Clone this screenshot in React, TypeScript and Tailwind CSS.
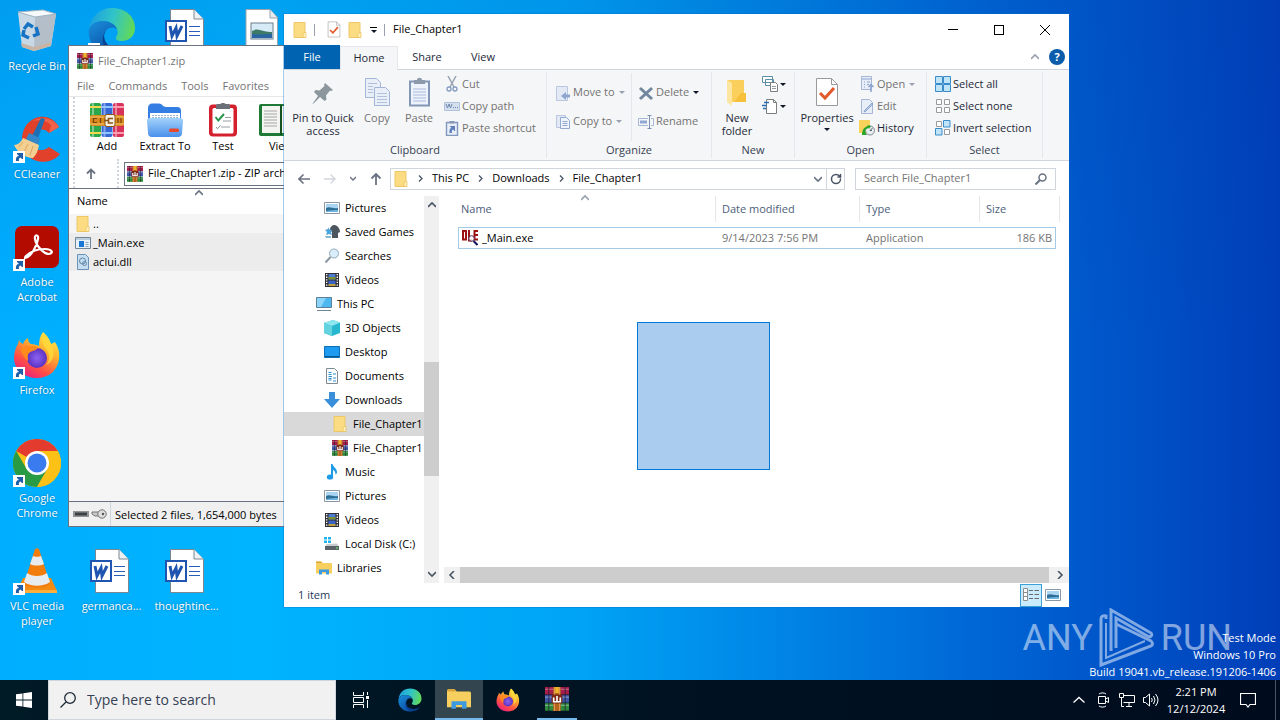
import { ReactNode } from "react";
import { RotateCw } from "lucide-react";

/* ---------- icons ---------- */

const Folder = ({ className = "h-4 w-4" }) => (
  <svg className={className} viewBox="0 0 16 16" aria-hidden="true">
    <path d="M2 .5h11v15H2z" fill="#fbdc82" stroke="#eec868" />
    <path d="M12 10.5h2v5h-3v-3z" fill="#fff0bd" stroke="#e9bf55" strokeWidth=".7" />
  </svg>
);

const WinrarIcon = ({ className = "h-4 w-4" }) => (
  <svg className={className} viewBox="0 0 16 16" aria-hidden="true">
    <rect x="0" y="0" width="16" height="5" fill="#a51e4b" />
    <rect x="0" y="5.4" width="16" height="5" fill="#3f55a8" />
    <rect x="0" y="10.8" width="16" height="5" fill="#2e8a3c" />
    <path d="M0 1.5h16M0 6.8h16M0 12.2h16" stroke="#fff" strokeOpacity=".35" strokeWidth=".8" />
    <path d="M2.5 0v16M13.5 0v16" stroke="#1d1d2c" strokeOpacity=".55" strokeWidth=".9" />
    <rect x="5.5" y="0" width="5" height="16" fill="#b5651d" />
    <path d="M6.3 0v16M9.7 0v16" stroke="#e9a35a" strokeWidth=".6" />
    <rect x="4.4" y="5" width="7.2" height="6" rx=".8" fill="#7c2a18" />
    <path d="M5.8 7v2.800h4.400V7M8 6v3.800" fill="none" stroke="#fff" strokeWidth="1.1" />
    <rect x="6.8" y="0" width="2.4" height="4" fill="#f0b429" />
  </svg>
);

const AddIcon = () => (
  <svg className="h-[34px] w-[34px]" viewBox="0 0 34 34" aria-hidden="true">
    <rect x="0" y="0" width="11" height="34" rx="2" fill="#2aa84a" />
    <rect x="11.5" y="0" width="11" height="34" rx="2" fill="#3567d6" />
    <rect x="23" y="0" width="11" height="34" rx="2" fill="#d6325a" />
    <path d="M3 0v34M14.5 0v34M26 0v34" stroke="#fff" strokeOpacity=".4" strokeWidth="2" />
    <path d="M0 4h11M0 30h11" stroke="#f3d84c" strokeWidth="2" />
    <path d="M11.5 4h11M11.5 30h11" stroke="#8fc4ff" strokeWidth="2" />
    <path d="M23 4h11M23 30h11" stroke="#ff9bb0" strokeWidth="2" />
    <rect x="0" y="12" width="34" height="11" rx="2" fill="#d78a1f" />
    <path d="M0 14h34M0 21h34" stroke="#f7c568" />
    <path d="M7 15.5H3.5v4H7M10.5 15v5M28 15v5M31 15v5" fill="none" stroke="#7b420b" strokeWidth="1.2" />
    <rect x="15" y="11.5" width="10" height="12" rx="2" fill="#f8f2e6" stroke="#8c5413" />
    <path d="M23 15.5h-4.5v4.5H23M14 17.5h5" fill="none" stroke="#8c5413" strokeWidth="1.6" />
  </svg>
);

const ExtractIcon = () => (
  <svg className="h-[34px] w-[36px]" viewBox="0 0 36 34" aria-hidden="true">
    <defs>
      <linearGradient id="extract" x1="0" y1="0" x2="0" y2="1">
        <stop offset="0" stopColor="#a4d3fb" />
        <stop offset="1" stopColor="#4a90ec" />
      </linearGradient>
    </defs>
    <path d="M1 5c0-3 2-4.5 4-4.5h7c3 0 4 3.500 7 3.500h11c3 0 4 1.500 4 4v22H1z" fill="#347de3" />
    <rect x="3" y="10" width="30" height="12" fill="#fff" />
    <path d="M5 12.5h26M5 14.5h26" stroke="#9bb6d6" strokeDasharray="2 1" />
    <path d="M0 18c0-2 1-3 3-3h30c2 0 3 1 3 3l-1 12c0 2.500-1.500 4-4 4H5c-2.500 0-4-1.500-4-4z" fill="url(#extract)" />
    <rect x="22" y="25.5" width="10" height="3.500" rx="1.500" fill="#e8482e" />
  </svg>
);

const TestIcon = () => (
  <svg className="h-[34px] w-[28px]" viewBox="0 0 28 34" aria-hidden="true">
    <rect x="0" y="1.5" width="28" height="32" rx="4" fill="#d4202c" />
    <rect x="3.5" y="5" width="21" height="25.5" rx="1.5" fill="#fff" />
    <path d="M7 6V3c0-1.500 1-2 2-2h2.500c.5-1.200 4.500-1.200 5 0H19c1 0 2 .5 2 2v3z" fill="#6b7078" />
    <path d="m6.500 14 2.800 3.500L15 11" fill="none" stroke="#27964a" strokeWidth="2" />
    <path d="M16 14.500h6M14 18h8M12 24h9" stroke="#9a9fa6" />
    <path d="m7 24 1.500 1.800 3-3.500" fill="none" stroke="#8a8f96" />
  </svg>
);

const ViewIcon = () => (
  <svg className="h-[34px] w-[44px]" viewBox="0 0 44 34" aria-hidden="true">
    <rect x="0" y="1" width="44" height="32" rx="2" fill="#1f7a35" />
    <path d="M3 3h18v27H3zM23 3h18v27H23z" fill="#f4f4f0" />
    <path d="M5 8h13M5 11h13M5 14h13M5 17h13M5 20h13M5 23h13M26 8h12M26 11h12M26 14h12" stroke="#a5a8a8" />
    <path d="M22 2v30" stroke="#14521f" strokeWidth="2" />
  </svg>
);

const Edge = ({ className = "h-6 w-6" }) => (
  <svg className={className} viewBox="0 0 48 48" aria-hidden="true">
    <defs>
      <linearGradient id="edgeTop" x1="0" y1=".3" x2="1" y2=".5">
        <stop offset="0" stopColor="#1b9fe0" />
        <stop offset=".5" stopColor="#31c4c8" />
        <stop offset="1" stopColor="#62d957" />
      </linearGradient>
      <linearGradient id="edgeBody" x1="0" y1="0" x2=".6" y2="1">
        <stop offset="0" stopColor="#1a8fdc" />
        <stop offset="1" stopColor="#0b4fa5" />
      </linearGradient>
    </defs>
    <path d="M1 22C3 9 12 1 24 1c14 0 23 9 23 20 0 8-6 13-13 13-5 0-7-2-6-4 2-3 2-5 1-8-2-5-8-8-14-8C8 14 3 17 1 22z" fill="url(#edgeTop)" />
    <path d="M1 22c3-6 8-8 14-8 6 0 12 3 14 8-7-4-13 1-13 8 0 8 7 16 15 16-4 1-6 1-8 1C9 47-1 35 1 22z" fill="url(#edgeBody)" />
    <path d="M16 28c0 10 8 14 16 14 5 0 9-2 12-5-4 7-10 10-17 9-11-1-16-14-9-22z" fill="#0a3f8f" />
  </svg>
);

const Firefox = ({ className = "h-6 w-6" }) => (
  <svg className={className} viewBox="0 0 48 48" aria-hidden="true">
    <defs>
      <linearGradient id="fox" x1=".8" y1="0" x2=".2" y2="1">
        <stop offset="0" stopColor="#fff04a" />
        <stop offset=".35" stopColor="#ffb02e" />
        <stop offset=".7" stopColor="#ff4f45" />
        <stop offset="1" stopColor="#e5198b" />
      </linearGradient>
      <radialGradient id="foxGlobe">
        <stop offset="0" stopColor="#8b62f2" />
        <stop offset="1" stopColor="#5b32c0" />
      </radialGradient>
    </defs>
    <path d="M30 1c5 4 7 9 8 12l4-2c3 5 5 10 4 17-1 11-10 19-22 19S1 39 1 27c0-6 2-11 4-14l1-4c1 2 2 3 4 4 1-3 3-5 5-6 0 3 1 5 3 6 3 0 6 1 8 2 0-6 1-10 4-14z" fill="url(#fox)" />
    <circle cx="24" cy="27" r="10" fill="url(#foxGlobe)" />
    <path d="M7 18c5-4 12-4 18-2-1 4-5 3-9 6-2 2-1 5-1 8-4-3-6-8-8-12z" fill="#ff8a1e" />
    <path d="M30 2c-3 8 0 12 4 17 3 5 3 11-1 15 8-3 10-13 5-21-1-3-3-8-8-11z" fill="#ffd93b" fillOpacity=".8" />
  </svg>
);

const Chrome = () => (
  <svg className="h-12 w-12" viewBox="0 0 48 48" aria-hidden="true">
    <circle cx="24" cy="24" r="24" fill="#fbc116" />
    <path d="M24 24 3.200 12A24 24 0 0 1 44.800 12z" fill="#e33b2e" />
    <path d="M3.200 12A24 24 0 0 0 24 48l10.400-18L24 36 13.600 30z" fill="#2a9b45" />
    <path d="M24 12h20.800A24 24 0 0 1 24 48l10.400-18z" fill="#fbc116" />
    <circle cx="24" cy="24" r="12" fill="#fff" />
    <circle cx="24" cy="24" r="9.500" fill="#3a7bef" />
  </svg>
);

const RecycleBin = () => (
  <svg className="h-12 w-12" viewBox="0 0 48 48" aria-hidden="true">
    <path d="M5 5 30 3l13 4-5 32-17 5-12-4z" fill="#d3dbe3" fillOpacity=".95" />
    <path d="m22 10 21-3-5 32-17 5z" fill="#b3bec9" />
    <path d="M5 5 30 3l13 4-21 3z" fill="#f6fafc" stroke="#9fb3c2" />
    <path d="m8 36 13 4 17-5-.5 4L21 44 9 40z" fill="#c8b5a5" />
    <g fill="none" stroke="#1673c4" strokeWidth="3.500">
      <path d="m11 22 4-5 5 3M23 20l2 7-5 2M16 31l-6-3 1-5" />
    </g>
  </svg>
);

const Ccleaner = () => (
  <svg className="h-12 w-12" viewBox="0 0 48 48" aria-hidden="true">
    <path d="m46 12-10 6c-6-7-17-3-17 7s10 13 17 7l11 7C36 53 9 48 9 25 9 1 36-6 46 12z" fill="#e1402b" />
    <path d="M46 12c-6-8-16-12-26-6 8-2 14 0 18 4l-2 8z" fill="#f0634a" />
    <path d="m28 3 4 1-8 22-6-3z" fill="#1e6fb4" />
    <path d="m16 18 11 5-2 8-13-5z" fill="#3487c8" />
    <path d="m10 23 16 7c-1 5-2 9-6 13C12 43 4 37 1 30c4 0 7-3 9-7z" fill="#f4cf92" />
    <path d="m10 27-4 5M15 29l-4 8M20 31l-3 9" stroke="#d9a65f" />
  </svg>
);

const Acrobat = () => (
  <svg className="h-12 w-12" viewBox="0 0 48 48" aria-hidden="true">
    <rect x="2" y="3" width="44" height="42" rx="7" fill="#b30b00" />
    <path
      d="M12 35c6-1 12-12 13-19 1-5-4-5-3 0 1 7 9 15 14 15 5-1 3-5-4-5-8 0-15 3-19 7-1 1-1 2-1 2z"
      fill="none"
      stroke="#fff"
      strokeWidth="2.200"
    />
  </svg>
);

const Vlc = () => (
  <svg className="h-12 w-12" viewBox="0 0 48 48" aria-hidden="true">
    <path d="M10 31h28l6 13c0 2-1 2-2 2H6c-1 0-2 0-2-2z" fill="#f48b14" />
    <path d="M4 43h40v3H4z" fill="#ffae3b" />
    <path d="M22 2c1-1 3-1 4 0l11 35c-4 5-22 5-26 0z" fill="#f27d0c" />
    <path d="m20 9-3 8c4 2 10 2 14 0l-3-8c-2 1-6 1-8 0zM14 26l-3 9c7 5 19 5 26 0l-3-9c-5 4-15 4-20 0z" fill="#e9ecef" />
  </svg>
);

const WordDoc = () => (
  <svg className="h-12 w-12" viewBox="0 0 48 48" aria-hidden="true">
    <path d="M7.500 2.500H31l9.500 10v33h-33z" fill="#fff" stroke="#7c8791" />
    <path d="M31 2.500V12h9.500" fill="#eef1f3" stroke="#7c8791" />
    <path d="M26 19.500h11M26 24.500h11M26 28.500h11" stroke="#2a5db5" />
    <rect x="3" y="14" width="20" height="20" fill="#fff" stroke="#1f55b0" strokeWidth="2" />
    <path d="m7 19 2 10 4-8 1 8 5-10" fill="none" stroke="#1f55b0" strokeWidth="3" />
  </svg>
);

const PictureDoc = () => (
  <svg className="h-12 w-12" viewBox="0 0 48 48" aria-hidden="true">
    <path d="M8 2.500h24l7.500 8v35H8z" fill="#fff" stroke="#98a3ab" />
    <path d="M32 2.500V11h7.500" fill="#e7ebee" stroke="#98a3ab" />
    <rect x="13" y="16" width="22" height="16" fill="#d7ebf7" stroke="#6d7f8c" />
    <path d="M14 24c7-4 11 2 20 1v6H14z" fill="#3d7a68" />
    <path d="M14 27c7 1 13 0 20 0v4H14z" fill="#2a64a3" />
  </svg>
);

const Shortcut = () => (
  <svg className="absolute bottom-0 left-0 h-3 w-3" viewBox="0 0 12 12" aria-hidden="true">
    <path d="M0 0h12v12H0z" fill="#fff" />
    <path d="M3 10c-.5-3 .5-5 3-5L4 3V2h6v6H9L7.500 6.500C6 7 5.500 8 6 10z" fill="#1f5fa8" />
  </svg>
);

const ImageIcon = () => (
  <svg className="h-4 w-4" viewBox="0 0 16 16" aria-hidden="true">
    <path d="M.5 2.500h15v11H.5z" fill="#fff" stroke="#8b98a3" />
    <path d="M2 4h12v8H2z" fill="#a9d5f3" />
    <path d="M2 8c4-2 7 1 12 0v4H2z" fill="#2f6f96" />
    <path d="M2 11c5-1 8-1 12-1v2H2z" fill="#6db6e4" />
  </svg>
);

const GamesIcon = () => (
  <svg className="h-4 w-4" viewBox="0 0 16 16" aria-hidden="true">
    <path d="M8 14V8L6 6c0-3 2-5 5-5 3 1 5 4 5 7l-2 1v5z" fill="#4d565e" />
    <path d="m4 3 1 2 3 1-1 2 1 3-3-1-3 1 1-3-2-2 3-1z" fill="#4ea3dc" />
    <path d="M1 12h6v2H2z" fill="#8ab9d6" />
  </svg>
);

const SearchesIcon = () => (
  <svg className="h-4 w-4" viewBox="0 0 16 16" aria-hidden="true">
    <circle cx="10" cy="5.500" r="4.500" fill="#d8eefb" stroke="#93a9b9" />
    <path d="M6.500 9 1.500 14.500" stroke="#8a97a2" strokeWidth="2" />
  </svg>
);

const VideoIcon = () => (
  <svg className="h-4 w-4" viewBox="0 0 16 16" aria-hidden="true">
    <path d="M1 1h14v14H1z" fill="#2f2f33" />
    <path d="M2.700 2v13M13.300 2v13" stroke="#fff" strokeWidth="1.400" strokeDasharray="1.300 1.300" />
    <path d="M4.500 2h7v5.500h-7z" fill="#4c7bd0" />
    <path d="M4.500 5h7v2.500h-7z" fill="#7a8c34" />
    <path d="M4.500 8.500h7V14h-7z" fill="#3d63c7" />
    <path d="M4.500 12h7v2h-7z" fill="#c0a03a" />
  </svg>
);

const PcIcon = () => (
  <svg className="h-4 w-4" viewBox="0 0 16 16" aria-hidden="true">
    <path d="M.5 1.500h15v10H.5z" fill="#4db8f0" stroke="#5c7f96" />
    <path d="M1 2h9L5 11H1z" fill="#8bd5fa" />
    <path d="M1 14.500h14" stroke="#6f8796" />
  </svg>
);

const CubeIcon = () => (
  <svg className="h-4 w-4" viewBox="0 0 16 16" aria-hidden="true">
    <path d="M0 3 9 0l7 2.500V13l-8 3-8-3z" fill="#27b7cf" />
    <path d="m0 3 9-3 7 2.500L8 6z" fill="#8fe7ef" />
    <path d="m0 3 8 3v10l-8-3z" fill="#63d4df" />
  </svg>
);

const DesktopIcon = () => (
  <svg className="h-4 w-4" viewBox="0 0 16 16" aria-hidden="true">
    <path d="M.5 2.500h15v11H.5z" fill="#1c9bf0" stroke="#0b6fb8" />
    <path d="M1 12.500h14" stroke="#0a578f" />
  </svg>
);

const DocIcon = () => (
  <svg className="h-4 w-4" viewBox="0 0 16 16" aria-hidden="true">
    <path d="M2.500.5h8l3 3v12h-11z" fill="#fff" stroke="#7e8b95" />
    <path d="M4.500 4.500h3M9 6h3M4.500 8.500H8M9 10h3M4.500 12h3M9 13h3M4.500 6.500h3M4.500 10.500h3" stroke="#2b8fd0" />
  </svg>
);

const DownArrow = () => (
  <svg className="h-4 w-4" viewBox="0 0 16 16" aria-hidden="true">
    <path d="M5 0h6v7h5l-8 9-8-9h5z" fill="#3a8fdb" />
  </svg>
);

const MusicIcon = () => (
  <svg className="h-4 w-4" viewBox="0 0 16 16" aria-hidden="true">
    <path d="M7 0h1.500c.5 3 5 4.500 4.500 9l-1.500 1.500C11.500 8 10.500 6.500 9 6v7H7z" fill="#1e9be8" />
    <ellipse cx="6" cy="13" rx="3.200" ry="2.600" fill="#1e9be8" />
  </svg>
);

const DiskIcon = () => (
  <svg className="h-4 w-4" viewBox="0 0 16 16" aria-hidden="true">
    <path d="M0 1h3v2.500H0zM4 1h3v2.500H4zM0 4.500h3V7H0zM4 4.500h3V7H4z" fill="#1fb3ea" />
    <path d="m3 8 10-.5 2 3H1z" fill="#c8ccd0" />
    <path d="M1 10h14v4H1z" fill="#5b6168" />
    <path d="M12 12h2" stroke="#6dfc6d" />
  </svg>
);

const LibraryIcon = ({ className = "h-4 w-4" }) => (
  <svg className={className} viewBox="0 0 16 16" aria-hidden="true">
    <path d="M0 2.500c0-.5.500-1 1-1h4L6.500 3H15c.5 0 1 .5 1 1v9.500H0z" fill="#f7cf5f" />
    <path d="M0 2.500c0-.5.500-1 1-1h4L6.500 3H0z" fill="#dca53a" />
    <path d="M3 14.500V9.500h10v5h-3V12H6v2.500z" fill="#3f9be0" />
  </svg>
);

const Caret = ({ className = "fill-gray-900" }) => (
  <svg className={`h-[3px] w-[6px] ${className}`} viewBox="0 0 6 3" aria-hidden="true">
    <path d="M0 0h6L3 3z" />
  </svg>
);

const Chevron = ({ className = "" }) => (
  <svg className={`h-2 w-2 fill-none stroke-current ${className}`} viewBox="0 0 8 8" aria-hidden="true">
    <path d="m0 2 4 4 4-4" strokeWidth="1.600" />
  </svg>
);

/* ribbon icons, faded ones belong to disabled commands */

const PinIcon = () => (
  <svg className="h-8 w-8" viewBox="0 0 32 32" aria-hidden="true">
    <path d="m18 6 8 7-2 1-1-.5-4 5 .5 4-2 1.500-4.500-4-6.500 6.500-1 .5.500-1L11 19l-4-4 1.500-2 4 .5 5-4.500-.5-1z" fill="#8b969d" />
  </svg>
);

const CopyIcon = () => (
  <svg className="h-8 w-8" viewBox="0 0 32 32" aria-hidden="true">
    <g fill="#e9eff9" stroke="#a3b5d6">
      <path d="M4.500 1.500h11l4 4v15h-15z" />
      <path d="M13.500 10.500h11l4 4v14h-15z" />
    </g>
    <path d="M7 6.500h9M7 9.500h5M7 12.500h5M7 15.500h5M16 16.500h10M16 19.500h10M16 22.500h10M16 25.500h10" stroke="#b2c0db" />
  </svg>
);

const PasteIcon = () => (
  <svg className="h-8 w-8" viewBox="0 0 32 32" aria-hidden="true">
    <path d="M7 4.500h19v24H7z" fill="#eef2fa" stroke="#8296b5" strokeWidth="2" />
    <path d="M11 7V3h3c0-3 5-3 5 0h3v4z" fill="#8c9aac" />
    <path d="M10 12h13M10 15h13M10 18h13M10 21h13M10 24h13" stroke="#a8b9dc" />
  </svg>
);

const CutIcon = () => (
  <svg className="h-4 w-4" viewBox="0 0 16 16" fill="none" aria-hidden="true">
    <path d="m4 0 6 11M12 0 6 11" stroke="#98a4b1" strokeWidth="1.500" />
    <circle cx="5" cy="13" r="2" stroke="#829cc0" strokeWidth="1.300" />
    <circle cx="11" cy="13" r="2" stroke="#829cc0" strokeWidth="1.300" />
  </svg>
);

const PathIcon = () => (
  <svg className="h-4 w-4" viewBox="0 0 16 16" fill="none" aria-hidden="true">
    <path d="M.5 4.500h15v8H.5z" fill="#d5e0ef" stroke="#b1c1da" />
    <path d="m2 6 1.500 4L5 6l1.500 4L8 6M9 9.500h1M11 9.500h1M13 9.500h1" stroke="#6f87ad" />
  </svg>
);

const PasteShortcutIcon = () => (
  <svg className="h-4 w-4" viewBox="0 0 16 16" aria-hidden="true">
    <path d="M2.500 2.500h11v13h-11z" fill="#e8eef8" stroke="#8298bf" strokeWidth="1.400" />
    <path d="M5.500 1h5v2.500h-5z" fill="#8b9ab4" />
    <path d="M5.500 13c-.5-3 .5-5 2-5L6 6.500V6h5v5h-.5L9 9.500C8 10 7.500 11 8 13z" fill="#5f7fbb" />
  </svg>
);

const MoveIcon = () => (
  <svg className="h-4 w-4" viewBox="0 0 16 16" aria-hidden="true">
    <path d="M1.500 1.500h11v14h-11z" fill="#e3eaf6" stroke="#b9c7e0" />
    <path d="M15 9.500h-4V7l-5 4 5 4v-2.500h4z" fill="#8da6d0" />
  </svg>
);

const CopyToIcon = () => (
  <svg className="h-4 w-4" viewBox="0 0 16 16" fill="none" aria-hidden="true">
    <path d="M1.500 1.500h9v12h-9z" fill="#e3eaf6" stroke="#b9c7e0" />
    <path d="M5.500 3.500h6l3 3v8h-9z" fill="#eef3fb" stroke="#94a9cf" />
    <path d="M7.500 7.500h5M7.500 9.500h5M7.500 11.500h5" stroke="#94a9cf" />
  </svg>
);

const DeleteIcon = () => (
  <svg className="h-4 w-4" viewBox="0 0 16 16" aria-hidden="true">
    <path d="m2 3 12 11M14 3 2 14" stroke="#71879f" strokeWidth="3" />
  </svg>
);

const RenameIcon = () => (
  <svg className="h-4 w-4" viewBox="0 0 16 16" fill="none" aria-hidden="true">
    <path d="M10 4.500H.5v7H10M13 4.500h2.500v7H13" stroke="#a7b8d5" />
    <path d="M2 6.500h7v3H2z" fill="#8fa8d3" />
    <path d="M9.500 1.500h4M9.500 14.500h4M11.500 1.500v13" stroke="#7b90b3" />
  </svg>
);

const NewFolderIcon = () => (
  <svg className="h-8 w-8" viewBox="0 0 32 32" aria-hidden="true">
    <path d="M6 3h17v22H6z" fill="#fbcf5b" />
    <path d="m6 3 5 3v23l-5-4z" fill="#fde6a2" />
    <path d="M20 16h5v9H13z" fill="#f6bf3c" />
  </svg>
);

const NewItemIcon = () => (
  <svg className="h-4 w-4" viewBox="0 0 16 16" fill="none" aria-hidden="true">
    <path d="M.5.500h10v6H.5zM3.500 3.500h8v6h-8z" fill="#fff" stroke="#5d8fa8" />
    <path d="M8.500 6.500h5l2 2v7h-7z" fill="#fff" stroke="#7d7d7d" />
    <path d="M10 10.500h4M10 12.500h4" stroke="#9a9a9a" />
  </svg>
);

const EasyAccessIcon = () => (
  <svg className="h-4 w-4" viewBox="0 0 16 16" fill="none" aria-hidden="true">
    <path d="M4.500 1.500h7l3 3v11h-10z" fill="#fff" stroke="#7d7d7d" />
    <path d="M11.500 1.500v3h3" stroke="#7d7d7d" />
    <path d="M2 4.500h5M0 7.500h5M1 10.500h3" stroke="#2b6db3" strokeWidth="1.300" />
  </svg>
);

const PropertiesIcon = ({ className = "h-8 w-8" }) => (
  <svg className={className} viewBox="0 0 32 32" fill="none" aria-hidden="true">
    <path d="M5.500 1.500h15l6 6v21h-21z" fill="#fff" stroke="#9a9a9a" />
    <path d="M20.500 1.500v6h6" stroke="#9a9a9a" />
    <path d="m9 16 5 5 9-10" stroke="#e2592c" strokeWidth="3" />
  </svg>
);

const OpenIcon = () => (
  <svg className="h-4 w-4" viewBox="0 0 16 16" fill="none" aria-hidden="true">
    <path d="M2.500.500h10v13h-10z" fill="#e8eef8" stroke="#a6b6d4" />
    <path d="M3 3h9M5 6h1M8 6h3M5 8.500h1M8 8.500h2M5 11h1" stroke="#8ba3cf" />
    <path d="M12 8v8M9.500 11 12 8.500l2.500 2.500" stroke="#8ba3cf" strokeWidth="1.500" />
  </svg>
);

const EditIcon = () => (
  <svg className="h-4 w-4" viewBox="0 0 16 16" fill="none" aria-hidden="true">
    <path d="M2.500 1.500h8l3 3v11h-11z" fill="#e8eef8" stroke="#a6b6d4" />
    <path d="m14 6-7 7-2 1 1-2 7-7z" fill="#c3cfe4" stroke="#8ba3cf" />
  </svg>
);

const HistoryIcon = () => (
  <svg className="h-4 w-4" viewBox="0 0 16 16" fill="none" aria-hidden="true">
    <path d="M0 0h11v13H0z" fill="#f9d25c" />
    <circle cx="11" cy="10.500" r="4.500" fill="#e7edf0" stroke="#7d898f" />
    <path d="M11 10.500 13.500 8M11 10.500h2" stroke="#57626a" />
    <path d="M3 15c0-5 2-8 6-9l-1-1 4 1-2 3-.5-1C6 9 5 11 8 15z" fill="#28a528" />
  </svg>
);

const SelectAllIcon = () => (
  <svg className="h-4 w-4" viewBox="0 0 16 16" aria-hidden="true">
    <path d="M.5.500h7v7h-7zM8.500.500h7v7h-7zM.5 8.500h7v7h-7zM8.500 8.500h7v7h-7z" fill="#bfe3f8" stroke="#3a8cc8" />
  </svg>
);

const SelectNoneIcon = () => (
  <svg className="h-4 w-4" viewBox="0 0 16 16" aria-hidden="true">
    <path d="M1.500 1.500h5v5h-5zM9.500 1.500h5v5h-5zM1.500 9.500h5v5h-5zM9.500 9.500h5v5h-5z" fill="#fff" stroke="#9a9a9a" />
  </svg>
);

const InvertIcon = () => (
  <svg className="h-4 w-4" viewBox="0 0 16 16" aria-hidden="true">
    <path d="M1.500 1.500h5v5h-5zM9.500 9.500h5v5h-5z" fill="#fff" stroke="#9a9a9a" />
    <path d="M8.500.500h6.500v6.500H8.500zM.5 8.500h6.500v6.500H.5z" fill="#bfe3f8" stroke="#3a8cc8" />
  </svg>
);

const OleIcon = () => (
  <svg className="h-4 w-4" viewBox="0 0 16 16" fill="none" aria-hidden="true">
    <g stroke="#9c1111" strokeWidth="2">
      <path d="M1 1h3v8.500H1zM7 0v10.500h3M16 1h-3.500v8.500H16M12.500 5H16" />
    </g>
    <circle cx="9.500" cy="8.500" r="2.800" fill="#fff" fillOpacity=".7" stroke="#5b2c55" />
    <path d="m11.500 11 4 4" stroke="#14145e" strokeWidth="2" />
  </svg>
);

const ExeIcon = () => (
  <svg className="h-4 w-4" viewBox="0 0 16 16" aria-hidden="true">
    <path d="M.5 2.500h15v11H.5z" fill="#e8f1f8" stroke="#6f8799" />
    <path d="M1 3h14v2H1z" fill="#b9cddd" />
    <path d="M4 6h5v6H4z" fill="#1877d2" />
    <path d="M10.500 7.500h3M10.500 9.500h3M10.500 11.500h3" stroke="#8fa7ba" />
  </svg>
);

const DllIcon = () => (
  <svg className="h-4 w-4" viewBox="0 0 16 16" fill="none" aria-hidden="true">
    <path d="M2.500.500h8l3 3v12h-11z" fill="#c5ddf0" stroke="#6c93b5" />
    <circle cx="7.500" cy="7" r="3" stroke="#6289ab" />
    <circle cx="9.500" cy="9.500" r="2" stroke="#6289ab" />
  </svg>
);

/* ---------- desktop ---------- */

const desktopIcons = [
  { label: "Recycle Bin", icon: <RecycleBin />, place: "col-start-1 row-start-1" },
  { label: "CCleaner", icon: <Ccleaner />, place: "col-start-1 row-start-2", shortcut: true },
  { label: "Adobe Acrobat", icon: <Acrobat />, place: "col-start-1 row-start-3", shortcut: true },
  { label: "Firefox", icon: <Firefox className="h-12 w-12" />, place: "col-start-1 row-start-4", shortcut: true },
  { label: "Google Chrome", icon: <Chrome />, place: "col-start-1 row-start-5", shortcut: true },
  { label: "VLC media player", icon: <Vlc />, place: "col-start-1 row-start-6", shortcut: true },
  { label: "", icon: <Edge className="h-12 w-12" />, place: "col-start-2 row-start-1", shortcut: true },
  { label: "", icon: <WordDoc />, place: "col-start-3 row-start-1" },
  { label: "", icon: <PictureDoc />, place: "col-start-4 row-start-1" },
  { label: "germanca...", icon: <WordDoc />, place: "col-start-2 row-start-6" },
  { label: "thoughtinc...", icon: <WordDoc />, place: "col-start-3 row-start-6" },
];

function DesktopIcons() {
  return (
    <div className="grid auto-rows-[108px] grid-cols-[74px_75px_75px_75px] pt-[7px]">
      {desktopIcons.map((item, i) => (
        <div key={i} className={`flex flex-col items-center ${item.place}`}>
          <div className="relative">
            {item.icon}
            {item.shortcut && <Shortcut />}
          </div>
          <span className="mt-[3px] w-[68px] text-center leading-[15px] text-white [text-shadow:0_0_2px_rgba(0,0,0,0.4)]">
            {item.label}
          </span>
        </div>
      ))}
    </div>
  );
}

function Watermark() {
  return (
    <>
      <div className="absolute right-[48px] bottom-3 flex items-center gap-1.5 opacity-50" aria-hidden="true">
        <span className="font-[Roboto,sans-serif] text-4xl text-white">ANY</span>
        <svg className="h-[60px] w-[56px]" viewBox="0 0 56 60" fill="none" stroke="#fff" strokeWidth="3">
          <path d="M7 11V8Q2 7 2 11V57L52 38Q55 36 52 33L17 16" />
          <path d="M7 15V50L46 33" strokeWidth="2" />
          <path d="M12 43V2L52 25Q54 28 50 29L17 10V40" />
        </svg>
        <span className="font-[Roboto,sans-serif] text-4xl text-white">RUN</span>
      </div>
      <div className="absolute right-1 bottom-0 text-right leading-[17px] text-white">
        <p>Test Mode</p>
        <p>Windows 10 Pro</p>
        <p>Build 19041.vb_release.191206-1406</p>
      </div>
    </>
  );
}

/* ---------- WinRAR window ---------- */

const archiveTools = [
  { label: "Add", icon: <AddIcon /> },
  { label: "Extract To", icon: <ExtractIcon /> },
  { label: "Test", icon: <TestIcon /> },
  { label: "View", icon: <ViewIcon /> },
];

const archiveFiles = [
  { name: "..", icon: <Folder />, selected: false },
  { name: "_Main.exe", icon: <ExeIcon />, selected: true },
  { name: "aclui.dll", icon: <DllIcon />, selected: true },
];

function WinrarWindow() {
  return (
    <section className="absolute top-[45px] bottom-[153px] left-[68px] flex w-[250px] flex-col border border-gray-500 bg-white">
      <header className="flex h-[30px] shrink-0 items-center gap-[5px] pl-2 text-neutral-500">
        <WinrarIcon />
        <span>File_Chapter1.zip</span>
      </header>
      <nav className="flex h-5 shrink-0 items-center gap-3.5 pl-2 text-neutral-500">
        <button>File</button>
        <button>Commands</button>
        <button>Tools</button>
        <button>Favorites</button>
      </nav>
      <div className="flex h-[63px] shrink-0 border-t border-gray-200 pl-1">
        <div className="w-[5px] border-l-2 border-dotted border-gray-300" />
        {archiveTools.map((tool) => (
          <button key={tool.label} className="flex w-[58px] shrink-0 flex-col items-center gap-px pt-1.5">
            {tool.icon}
            <span className="whitespace-nowrap">{tool.label}</span>
          </button>
        ))}
      </div>
      <div className="flex h-[30px] shrink-0 items-center border-b border-gray-500 pl-1">
        <div className="h-full w-[44px] border-l-2 border-dotted border-gray-300 text-gray-500">
          <button className="flex h-full w-8 items-center justify-center" aria-label="Up one level">
            <svg className="h-3 w-3 fill-none stroke-current" viewBox="0 0 12 12">
              <path d="M6 11V1.500M2 5.500l4-4 4 4" strokeWidth="1.800" />
            </svg>
          </button>
        </div>
        <div className="h-full w-[7px] border-l-2 border-dotted border-gray-300" />
        <div className="flex h-6 flex-1 items-center gap-[5px] border border-gray-500 pl-0.5">
          <WinrarIcon className="h-4 w-4 shrink-0" />
          <input className="w-full min-w-0 outline-none" aria-label="Archive path" defaultValue="File_Chapter1.zip - ZIP archive" />
        </div>
      </div>
      <div className="relative flex-1 bg-[#f5f5f5]">
        <Chevron className="absolute top-0 left-[126px] rotate-180 text-gray-500" />
        <table className="w-full">
          <thead>
            <tr className="h-[25px] bg-white text-left">
              <th className="pl-2 font-normal">Name</th>
            </tr>
          </thead>
          <tbody>
            {archiveFiles.map((file) => (
              <tr key={file.name} className={`h-[19px] ${file.selected ? "bg-[#ececec]" : ""}`}>
                <td className="p-0">
                  <div className="flex items-center gap-0.5 pl-1.5 leading-[19px]">
                    {file.icon}
                    <span>{file.name}</span>
                  </div>
                </td>
              </tr>
            ))}
          </tbody>
        </table>
      </div>
      <footer className="flex h-[25px] shrink-0 items-center border-t border-gray-500 bg-[#f0f0f0]">
        <div className="flex h-full w-[42px] items-center gap-0.5 border-r border-gray-300 pl-1">
          <svg className="h-3 w-4" viewBox="0 0 16 12">
            <path d="M0 3h16v6H0z" fill="#8f9396" />
            <path d="M2 4.500h12v3H2z" fill="#3c4043" />
          </svg>
          <svg className="h-3 w-4" viewBox="0 0 16 12" fill="none">
            <path d="M9 4H1v2l3 2h5" fill="#c9c9c9" stroke="#757575" />
            <circle cx="11" cy="6" r="4.200" fill="#ddd" stroke="#757575" />
            <circle cx="12" cy="6" r="1.200" fill="#555" />
          </svg>
        </div>
        <span className="pt-0.5 pl-1 whitespace-nowrap">Selected 2 files, 1,654,000 bytes</span>
      </footer>
    </section>
  );
}

/* ---------- Explorer window ---------- */

type CommandProps = {
  icon: ReactNode;
  label: string;
  disabled?: boolean;
  caret?: boolean;
};

function SmallCommand({ icon, label, disabled, caret }: CommandProps) {
  return (
    <button className={`flex h-[22px] items-center gap-0.5 whitespace-nowrap ${disabled ? "text-neutral-500" : "text-gray-800"}`}>
      {icon}
      <span>{label}</span>
      {caret && <Caret className={disabled && label !== "Delete" ? "ml-0.5 fill-gray-400" : "ml-0.5 fill-gray-900"} />}
    </button>
  );
}

function LargeCommand({ icon, label, disabled, caret, width }: CommandProps & { width: string }) {
  return (
    <button className={`flex flex-col items-center leading-[13px] ${width} ${disabled ? "text-neutral-500" : "text-gray-800"}`}>
      {icon}
      <span className="mt-0.5">{label}</span>
      {caret && <Caret className="mt-1 fill-gray-900" />}
    </button>
  );
}

function RibbonGroup({ name, width, children }: { name: string; width: string; children: ReactNode }) {
  return (
    <div className={`my-0.5 flex shrink-0 flex-col border-r border-gray-200 ${width}`}>
      <div className="flex h-[69px] shrink-0 pt-px">{children}</div>
      <div className="text-center leading-[17px] text-gray-700">{name}</div>
    </div>
  );
}

function Ribbon() {
  return (
    <div className="flex h-[92px] shrink-0 border-y border-gray-300 bg-[#f5f6f7]">
      <RibbonGroup name="Clipboard" width="w-[263px]">
        <div className="flex items-start pt-1 pl-1.5">
          <LargeCommand icon={<PinIcon />} label="Pin to Quick access" width="w-[66px]" />
          <LargeCommand icon={<CopyIcon />} label="Copy" width="w-[42px]" disabled />
          <LargeCommand icon={<PasteIcon />} label="Paste" width="w-[42px]" disabled />
        </div>
        <div className="pl-1">
          <SmallCommand icon={<CutIcon />} label="Cut" disabled />
          <SmallCommand icon={<PathIcon />} label="Copy path" disabled />
          <SmallCommand icon={<PasteShortcutIcon />} label="Paste shortcut" disabled />
        </div>
      </RibbonGroup>
      <RibbonGroup name="Organize" width="w-[165px]">
        <div className="flex w-[85px] flex-col justify-center gap-[7px] border-r border-gray-200 pl-2">
          <SmallCommand icon={<MoveIcon />} label="Move to" disabled caret />
          <SmallCommand icon={<CopyToIcon />} label="Copy to" disabled caret />
        </div>
        <div className="flex flex-col justify-center gap-[7px] pl-1.5">
          <SmallCommand icon={<DeleteIcon />} label="Delete" disabled caret />
          <SmallCommand icon={<RenameIcon />} label="Rename" disabled />
        </div>
      </RibbonGroup>
      <RibbonGroup name="New" width="w-[83px]">
        <div className="flex items-start pt-1 pl-1">
          <LargeCommand icon={<NewFolderIcon />} label="New folder" width="w-[42px]" />
        </div>
        <div className="pl-1">
          <button className="flex h-[22px] items-center gap-0.5" aria-label="New item">
            <NewItemIcon />
            <Caret />
          </button>
          <button className="flex h-[22px] items-center gap-0.5" aria-label="Easy access">
            <EasyAccessIcon />
            <Caret />
          </button>
        </div>
      </RibbonGroup>
      <RibbonGroup name="Open" width="w-[132px]">
        <div className="flex items-start pt-1 pl-1">
          <LargeCommand icon={<PropertiesIcon />} label="Properties" width="w-[56px]" caret />
        </div>
        <div className="pl-1">
          <SmallCommand icon={<OpenIcon />} label="Open" disabled caret />
          <SmallCommand icon={<EditIcon />} label="Edit" disabled />
          <SmallCommand icon={<HistoryIcon />} label="History" />
        </div>
      </RibbonGroup>
      <RibbonGroup name="Select" width="w-[116px]">
        <div className="pl-2">
          <SmallCommand icon={<SelectAllIcon />} label="Select all" />
          <SmallCommand icon={<SelectNoneIcon />} label="Select none" />
          <SmallCommand icon={<InvertIcon />} label="Invert selection" />
        </div>
      </RibbonGroup>
    </div>
  );
}

function TitleBar() {
  return (
    <header className="flex h-[31px] shrink-0 items-center">
      <div className="flex flex-1 items-center pl-2">
        <Folder />
        <div className="mx-1.5 h-3 w-px bg-gray-400" />
        <button className="px-1" aria-label="Properties">
          <PropertiesIcon className="h-[18px] w-[18px]" />
        </button>
        <button aria-label="New folder">
          <Folder />
        </button>
        <button className="flex flex-col items-center gap-0.5 px-[7px]" aria-label="Customize toolbar">
          <span className="h-px w-[7px] bg-black" />
          <Caret />
        </button>
        <div className="mr-2 h-3 w-px bg-gray-400" />
        <h1>File_Chapter1</h1>
      </div>
      <div className="flex h-full pr-px">
        <button className="flex w-[46px] items-center justify-center" aria-label="Minimize">
          <span className="h-px w-2.5 bg-black" />
        </button>
        <button className="flex w-[46px] items-center justify-center" aria-label="Maximize">
          <span className="h-2.5 w-2.5 border border-black" />
        </button>
        <button className="flex w-[46px] items-center justify-center" aria-label="Close">
          <svg className="h-2.5 w-2.5 stroke-black" viewBox="0 0 10 10">
            <path d="m0 0 10 10M10 0 0 10" />
          </svg>
        </button>
      </div>
    </header>
  );
}

function Tabs() {
  return (
    <div className="flex h-6 shrink-0 items-center text-gray-800">
      <button className="h-full w-[56px] bg-[#0063b1] text-white">File</button>
      <button className="relative -mb-0.5 h-full w-[58px] border-x border-t border-gray-200 bg-[#f5f6f7]">Home</button>
      <button className="h-full w-[58px]">Share</button>
      <button className="h-full w-[54px]">View</button>
      <div className="ml-auto flex items-center gap-2.5 pr-1">
        <Chevron className="rotate-180 text-gray-400" />
        <button className="h-4 w-4 rounded-full bg-[#0b5cab] leading-4 font-bold text-white" aria-label="Help">
          ?
        </button>
      </div>
    </div>
  );
}

function AddressBar() {
  const crumbs = ["This PC", "Downloads", "File_Chapter1"];
  return (
    <div className="flex h-[35px] shrink-0 items-center pr-[13px]">
      <div className="flex w-[106px] items-center justify-between pr-2 pl-3.5 text-gray-500">
        <button aria-label="Back">
          <svg className="h-3 w-3 fill-none stroke-current" viewBox="0 0 12 12">
            <path d="M12 6H1M5.500 1.500 1 6l4.500 4.500" strokeWidth="1.600" />
          </svg>
        </button>
        <button className="text-gray-300" aria-label="Forward">
          <svg className="h-3 w-3 fill-none stroke-current" viewBox="0 0 12 12">
            <path d="M0 6h11M6.500 1.500 11 6l-4.500 4.500" strokeWidth="1.400" />
          </svg>
        </button>
        <button aria-label="Recent locations">
          <svg className="h-1.5 w-1.5 fill-none stroke-current" viewBox="0 0 6 6">
            <path d="m0 1 3 3 3-3" strokeWidth="1.400" />
          </svg>
        </button>
        <button aria-label="Up">
          <svg className="h-3 w-3 fill-none stroke-current" viewBox="0 0 12 12">
            <path d="M6 12V1M1.500 5.500 6 1l4.500 4.500" strokeWidth="1.800" />
          </svg>
        </button>
      </div>
      <div className="flex h-[22px] flex-1 items-center border border-gray-300">
        <div className="flex flex-1 items-center pl-0.5">
          <Folder />
          {crumbs.map((crumb) => (
            <div key={crumb} className="flex items-center">
              <svg className="mx-2 h-[7px] w-[7px] fill-none stroke-gray-600" viewBox="0 0 7 7">
                <path d="m2 .5 3 3-3 3" strokeWidth="1.300" />
              </svg>
              <button>{crumb}</button>
            </div>
          ))}
        </div>
        <button className="px-1 text-gray-500" aria-label="Previous locations">
          <Chevron />
        </button>
        <button className="flex h-full w-[18px] items-center justify-center border-l border-gray-300 text-gray-600" aria-label="Refresh">
          <RotateCw className="h-3 w-3" strokeWidth={3} />
        </button>
      </div>
      <label className="ml-2.5 flex h-[22px] w-[201px] items-center border border-gray-300 px-2">
        <input type="search" className="w-full min-w-0 outline-none placeholder:text-neutral-500" placeholder="Search File_Chapter1" aria-label="Search File_Chapter1" />
        <svg className="h-3 w-3 shrink-0 fill-none stroke-gray-500" viewBox="0 0 12 12">
          <circle cx="7.500" cy="4.500" r="3.500" strokeWidth="1.500" />
          <path d="M5 7 .5 11.500" strokeWidth="2" />
        </svg>
      </label>
    </div>
  );
}

const tree = [
  { label: "Pictures", icon: <ImageIcon />, indent: "pl-10" },
  { label: "Saved Games", icon: <GamesIcon />, indent: "pl-10" },
  { label: "Searches", icon: <SearchesIcon />, indent: "pl-10" },
  { label: "Videos", icon: <VideoIcon />, indent: "pl-10" },
  { label: "This PC", icon: <PcIcon />, indent: "pl-8" },
  { label: "3D Objects", icon: <CubeIcon />, indent: "pl-10" },
  { label: "Desktop", icon: <DesktopIcon />, indent: "pl-10" },
  { label: "Documents", icon: <DocIcon />, indent: "pl-10" },
  { label: "Downloads", icon: <DownArrow />, indent: "pl-10" },
  { label: "File_Chapter1", icon: <Folder />, indent: "pl-12", active: true },
  { label: "File_Chapter1", icon: <WinrarIcon />, indent: "pl-12" },
  { label: "Music", icon: <MusicIcon />, indent: "pl-10" },
  { label: "Pictures", icon: <ImageIcon />, indent: "pl-10" },
  { label: "Videos", icon: <VideoIcon />, indent: "pl-10" },
  { label: "Local Disk (C:)", icon: <DiskIcon />, indent: "pl-10" },
  { label: "Libraries", icon: <LibraryIcon />, indent: "pl-8" },
];

function Sidebar() {
  return (
    <aside className="flex w-[155px] shrink-0">
      <ul className="min-w-0 flex-1 overflow-hidden">
        {tree.map((item, i) => (
          <li key={i} className={`flex h-6 items-center gap-[5px] whitespace-nowrap ${item.indent} ${item.active ? "bg-[#d9d9d9]" : ""}`}>
            <span className="shrink-0">{item.icon}</span>
            <span>{item.label}</span>
          </li>
        ))}
      </ul>
      <div className="flex w-[15px] flex-col items-center bg-[#f0f0f0] py-[5px] text-gray-600">
        <Chevron className="shrink-0 rotate-180" />
        <div className="mt-[153px] h-[114px] w-full shrink-0 bg-[#cdcdcd]" />
        <Chevron className="mt-auto shrink-0" />
      </div>
    </aside>
  );
}

function FilePane() {
  return (
    <div className="relative ml-[5px] flex min-w-0 flex-1 flex-col">
      <div className="relative flex-1 pl-3.5">
        <Chevron className="absolute -top-0.5 left-[137px] rotate-180 text-gray-400" />
        <table className="table-fixed border-separate border-spacing-0 text-neutral-500">
          <thead>
            <tr className="text-left text-[#4c607a]">
              <th className="h-[31px] w-[258px] p-0 align-top font-normal">
                <div className="border-r border-gray-200 pl-[3px] leading-[26px]">Name</div>
              </th>
              <th className="w-[144px] p-0 align-top font-normal">
                <div className="border-r border-gray-200 pl-1.5 leading-[26px]">Date modified</div>
              </th>
              <th className="w-[120px] p-0 align-top font-normal">
                <div className="border-r border-gray-200 pl-1.5 leading-[26px]">Type</div>
              </th>
              <th className="w-[76px] p-0 align-top font-normal">
                <div className="-mr-1 border-r border-gray-200 pl-1.5 leading-[26px]">Size</div>
              </th>
            </tr>
          </thead>
          <tbody>
            <tr>
              <td className="border-y border-l border-[#a3cbe6] p-0">
                <div className="flex h-5 items-center gap-1 pl-[3px] text-black">
                  <OleIcon />
                  <span>_Main.exe</span>
                </div>
              </td>
              <td className="border-y border-[#a3cbe6] py-0 pr-0 pl-1.5">9/14/2023 7:56 PM</td>
              <td className="border-y border-[#a3cbe6] py-0 pr-0 pl-1.5">Application</td>
              <td className="border-y border-r border-[#a3cbe6] py-0 pr-[3px] pl-0 text-right">186 KB</td>
            </tr>
          </tbody>
        </table>
        {/* rubber band selection */}
        <div className="absolute top-[126px] left-[193px] h-[148px] w-[133px] border border-[#0078d7] bg-[#aaccee]" />
      </div>
      <div className="flex h-4 shrink-0 items-center bg-[#f0f0f0] text-gray-600">
        <Chevron className="mx-1 rotate-90" />
        <div className="h-full flex-1 bg-[#cdcdcd]" />
        <Chevron className="mr-[5px] ml-[7px] -rotate-90" />
      </div>
    </div>
  );
}

function StatusBar() {
  return (
    <footer className="flex h-6 shrink-0 items-center pr-2 pl-3.5 text-[#1e395b]">
      <span className="flex-1">1 item</span>
      <button className="flex h-[23px] w-[22px] items-center justify-center border border-[#3a9fd6] bg-[#c9ebfb]" aria-label="Details view">
        <svg className="h-3.5 w-4" viewBox="0 0 16 14" fill="none">
          <path d="M.5.500h4v4h-4zM.5 4.500h4v4h-4zM.5 8.500h4v4h-4z" fill="#fff" stroke="#8d8d8d" />
          <path d="M6 2.500h4M11.500 2.500H16M6 6.500h4M11.500 6.500H16M6 10.500h4M11.500 10.500H16" stroke="#6a6a6a" />
        </svg>
      </button>
      <button className="ml-[3px]" aria-label="Large icons view">
        <ImageIcon />
      </button>
    </footer>
  );
}

function ExplorerWindow() {
  return (
    <section className="absolute top-3.5 right-[211px] bottom-[73px] left-[284px] flex flex-col bg-white shadow-[0_0_0_1px_rgba(0,110,200,0.35)]">
      <TitleBar />
      <Tabs />
      <Ribbon />
      <AddressBar />
      <div className="flex min-h-0 flex-1">
        <Sidebar />
        <FilePane />
      </div>
      <StatusBar />
    </section>
  );
}

/* ---------- taskbar ---------- */

function Taskbar() {
  return (
    <footer className="relative flex h-10 shrink-0 items-center bg-linear-to-r from-[#001a26] to-[#000c1e] text-white">
      <button className="flex w-12 justify-center" aria-label="Start">
        <svg className="h-4 w-4 fill-white" viewBox="0 0 16 16">
          <path d="M0 2.300 6.500 1.400v6.200H0zM7.300 1.300 16 0v7.600H7.300zM0 8.400h6.500v6.200L0 13.700zM7.300 8.400H16V16l-8.700-1.300z" />
        </svg>
      </button>
      <label className="flex h-full w-[288px] items-center gap-[11px] border border-gray-300 bg-[#f1f1f1] pl-[11px] text-gray-800">
        <svg className="h-4 w-4 shrink-0 fill-none stroke-gray-800" viewBox="0 0 16 16">
          <circle cx="10" cy="6" r="5.300" strokeWidth="1.300" />
          <path d="M6 10 .5 15.500" strokeWidth="1.300" />
        </svg>
        <input type="search" className="w-full min-w-0 text-sm outline-none placeholder:text-gray-700" placeholder="Type here to search" aria-label="Type here to search" />
      </label>
      <div className="flex h-full items-center gap-px">
        <button className="flex w-[49px] justify-center" aria-label="Task view">
          <svg className="h-4 w-4 fill-none stroke-white" viewBox="0 0 16 16">
            <path d="M.5 0v3.500h10V0M.5 16v-3.500h10V16M.5 5.500h10v5H.5zM14.500 0v3M14.500 8v8" />
            <path d="M13 4h3v3h-3z" fill="#fff" stroke="none" />
          </svg>
        </button>
        <button className="flex w-12 justify-center" aria-label="Edge">
          <Edge />
        </button>
        <button className="flex h-full w-12 items-center justify-center border-b-2 border-[#76b9ed] bg-[#33454f]" aria-label="File Explorer">
          <LibraryIcon className="h-6 w-6" />
        </button>
        <button className="flex w-12 justify-center" aria-label="Firefox">
          <Firefox />
        </button>
        <button className="mx-1 flex h-full w-10 items-center justify-center border-b-2 border-[#76b9ed]" aria-label="WinRAR">
          <WinrarIcon className="h-6 w-6" />
        </button>
      </div>
      <div className="ml-auto flex h-full items-center">
        <div className="flex items-center gap-2 pr-1.5">
          <svg className="h-4 w-4 fill-none stroke-white" viewBox="0 0 16 16">
            <path d="m2.500 10.500 5.500-5 5.500 5" strokeWidth="1.300" />
          </svg>
          <svg className="h-4 w-4 fill-none stroke-white" viewBox="0 0 16 16">
            <path d="M3.500 4.500h7v7h-7zM10.500 7l3-1.500v5l-3-1.500M4 2c2-1.500 5-1.500 7 0M4 14c2 1.500 5 1.500 7 0" />
          </svg>
          <svg className="h-4 w-4 fill-none stroke-white" viewBox="0 0 16 16">
            <path d="M5 3.500h10.500v7H4.500M.5 1.500h4v4h-4zM2.500 5.500v9H5M10 10.500v4M7 14.500h6" />
          </svg>
          <svg className="h-4 w-4 fill-none stroke-white" viewBox="0 0 16 16">
            <path d="M.5 5.500h2L6.500 2v12l-4-3.500h-2zM8.500 6q1.500 2 0 4M10.500 4q3 4 0 8M12.500 2q5 6 0 12" />
          </svg>
        </div>
        <div className="w-[62px] text-center leading-[17px]">
          <p>2:21 PM</p>
          <p>12/12/2024</p>
        </div>
        <button className="flex w-[42px] justify-center" aria-label="Notifications">
          <svg className="h-4 w-4 fill-none stroke-white" viewBox="0 0 16 16">
            <path d="M.5 1.500h15v11H10L8 15l-2-2.500H.5z" strokeWidth="1.200" />
          </svg>
        </button>
        <div className="mr-1 ml-1.5 h-full w-px bg-gray-600" />
      </div>
    </footer>
  );
}

export default function App() {
  return (
    <div className="flex h-screen flex-col overflow-hidden font-['Open_Sans','Noto_Sans',sans-serif] text-[11px] text-black">
      <main className="relative min-h-0 flex-1 bg-[linear-gradient(to_bottom,rgba(0,60,160,0.15),transparent_50%),linear-gradient(to_right,#00aeff,#00b4ff_20%,#00a4f6_45%,#0064d4_78%,#003eb8)]">
        <DesktopIcons />
        <Watermark />
        <WinrarWindow />
        <ExplorerWindow />
      </main>
      <Taskbar />
    </div>
  );
}
